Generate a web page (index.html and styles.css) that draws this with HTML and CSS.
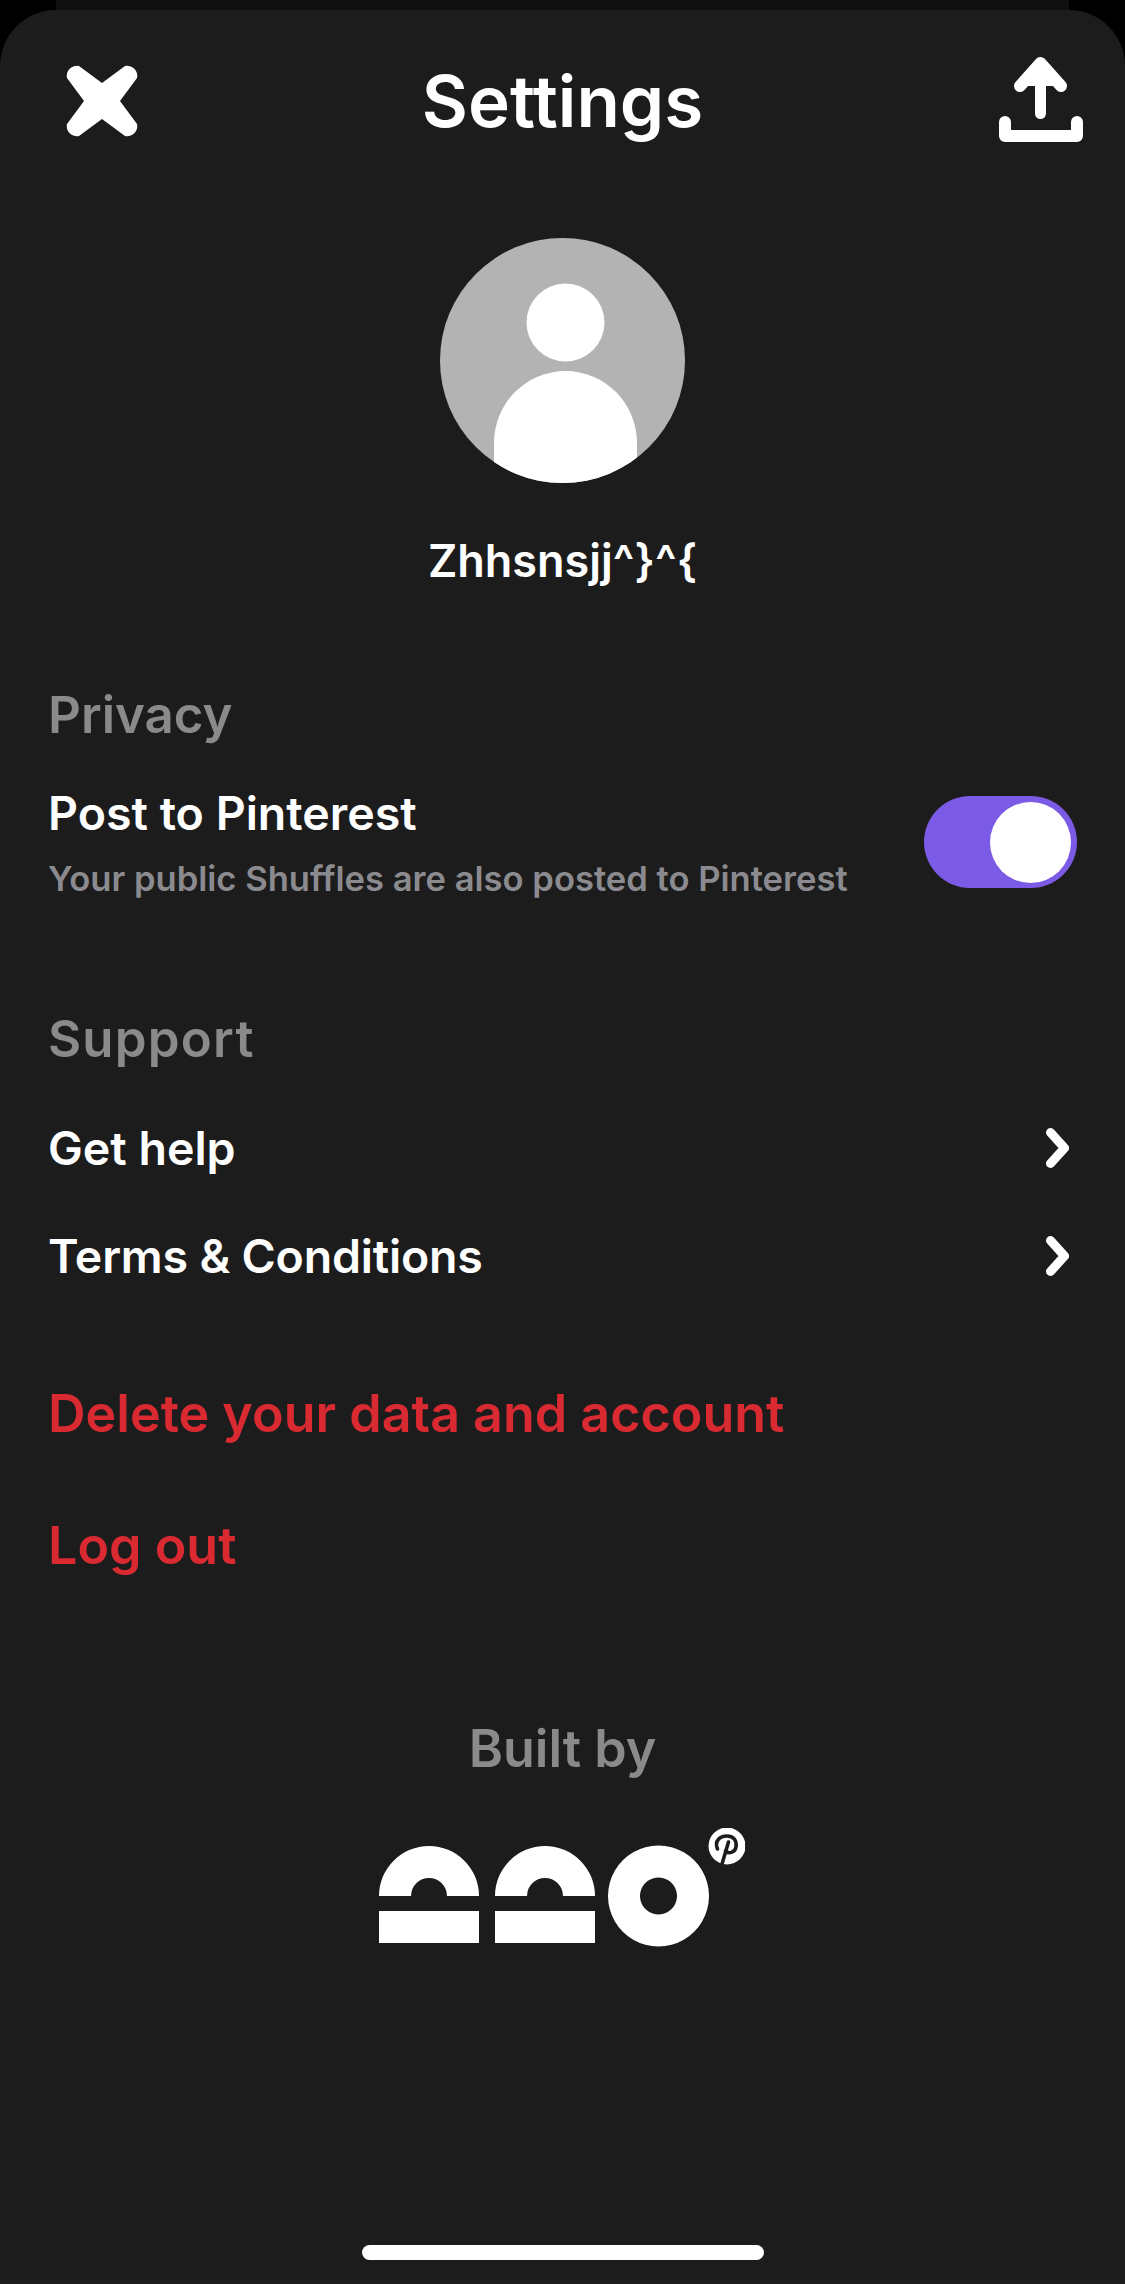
FILE: index.html
```html
<!DOCTYPE html>
<html lang="en">
<head>
<meta charset="utf-8">
<title>Settings</title>
<link rel="stylesheet" href="styles.css">
</head>
<body>
<div class="backsheet"></div>
<main class="sheet">
  <header class="topbar">
    <svg class="icon-close" viewBox="0 0 72 72" width="72" height="72" aria-hidden="true">
      <path d="M36 18 L13 1 A10 10 0 0 0 1 13 L18 36 L1 59 A10 10 0 0 0 13 71 L36 54 L59 71 A10 10 0 0 0 71 59 L54 36 L71 13 A10 10 0 0 0 59 1 Z" fill="#fff"/>
    </svg>
    <h1 class="title">Settings</h1>
    <svg class="icon-share" viewBox="0 0 84 86" width="84" height="86" aria-hidden="true">
      <path d="M21 30 L41.5 7 L62 30" fill="#fff" stroke="#fff" stroke-width="12" stroke-linecap="round" stroke-linejoin="round"/>
      <path d="M41.5 10 V57.5" fill="none" stroke="#fff" stroke-width="11" stroke-linecap="round"/>
      <path d="M6 66 V80 H78 V66" fill="none" stroke="#fff" stroke-width="12" stroke-linecap="round" stroke-linejoin="round"/>
    </svg>
  </header>

  <section class="profile">
    <svg class="avatar" viewBox="0 0 245 245" width="245" height="245" aria-hidden="true">
      <defs><clipPath id="avatar-clip"><circle cx="122.5" cy="122.5" r="122.5"/></clipPath></defs>
      <circle cx="122.5" cy="122.5" r="122.5" fill="#b3b3b3"/>
      <circle cx="125.5" cy="84.5" r="39" fill="#fff"/>
      <path clip-path="url(#avatar-clip)" d="M54 245 V205 A71.5 72 0 0 1 197 205 V245 Z" fill="#fff"/>
    </svg>
    <p class="username">Zhhsnsjj^}^{</p>
  </section>

  <section class="group group-privacy">
    <h2 class="group-title">Privacy</h2>
    <div class="toggle-row">
      <div class="toggle-text">
        <div class="row-label">Post to Pinterest</div>
        <div class="row-sub">Your public Shuffles are also posted to Pinterest</div>
      </div>
      <div class="switch"><span class="knob"></span></div>
    </div>
  </section>

  <section class="group group-support">
    <h2 class="group-title">Support</h2>
    <div class="link-row">
      <span class="row-label">Get help</span>
      <svg class="chevron" viewBox="0 0 23 40" width="23" height="40" aria-hidden="true"><path d="M4.5 4.5 L18.5 20 L4.5 35.5" fill="none" stroke="#fff" stroke-width="9" stroke-linecap="round" stroke-linejoin="round"/></svg>
    </div>
    <div class="link-row">
      <span class="row-label row-label-tight">Terms &amp; Conditions</span>
      <svg class="chevron" viewBox="0 0 23 40" width="23" height="40" aria-hidden="true"><path d="M4.5 4.5 L18.5 20 L4.5 35.5" fill="none" stroke="#fff" stroke-width="9" stroke-linecap="round" stroke-linejoin="round"/></svg>
    </div>
  </section>

  <section class="danger">
    <div class="danger-item">Delete your data and account</div>
    <div class="danger-item">Log out</div>
  </section>

  <footer class="built">
    <div class="built-label">Built by</div>
    <svg class="logo" viewBox="0 0 366 119" width="366" height="119" aria-hidden="true">
      <g fill="#fff">
        <path d="M0 68 A50 50 0 0 1 100 68 H68 A18 18 0 0 0 32 68 Z"/>
        <rect x="0" y="83" width="100" height="32"/>
        <path d="M116 68 A50 50 0 0 1 216 68 H184 A18 18 0 0 0 148 68 Z"/>
        <rect x="116" y="83" width="100" height="32"/>
        <path fill-rule="evenodd" d="M279.5 17.5 a50.5 50.5 0 1 0 0.01 0 Z M279.5 49.5 a18.5 18.5 0 1 1 -0.01 0 Z"/>
        <circle cx="348" cy="18" r="18.5"/>
      </g>
      <path d="M338.5 21 C335 13 341 8 348 8 C355 8 358 13 357 19 C356 25 349 26 346.5 23 M349.5 14 L343 36" fill="none" stroke="#1c1c1c" stroke-width="3.6" stroke-linecap="round"/>
    </svg>
  </footer>
  <div class="home-indicator"></div>
</main>
</body>
</html>
```

FILE: styles.css
```css
* { box-sizing: border-box; }
html, body { margin: 0; padding: 0; }
body {
  width: 1125px;
  height: 2284px;
  background: #000;
  font-family: Inter, "Liberation Sans", sans-serif;
  overflow: hidden;
  color: #fff;
}
h1, h2, p { margin: 0; font: inherit; }
.backsheet {
  height: 10px;
  margin: 0 56px -10px;
  background: #101010;
}
.sheet {
  display: flex;
  flex-direction: column;
  height: 2274px;
  margin-top: 10px;
  background: #1c1c1c;
  border-radius: 56px 56px 0 0;
  position: relative;
}
.topbar {
  height: 128px;
  padding: 46px 42px 0;
  display: grid;
  grid-template-columns: 1fr auto 1fr;
  align-items: start;
}
.icon-close { margin: 9px 0 0 24px; }
.icon-share { justify-self: end; }
.title {
  margin-top: 5px;
  font-size: 71px;
  line-height: 80px;
  font-weight: 600;
}
.profile {
  margin-top: 100px;
  display: flex;
  flex-direction: column;
  align-items: center;
}
.avatar { display: block; }
.username {
  margin-top: 48px;
  font-size: 45px;
  line-height: 60px;
  font-weight: 600;
}
.group { padding: 0 48px; }
.group-privacy { margin-top: 94px; }
.group-title {
  font-size: 51px;
  line-height: 60px;
  font-weight: 600;
  color: #8a8a8a;
}
.group-support .group-title { letter-spacing: 1.2px; }
.toggle-row {
  display: flex;
  justify-content: space-between;
  align-items: center;
  margin-top: 38px;
}
.row-label {
  font-size: 46.5px;
  line-height: 60px;
  font-weight: 600;
  color: #fff;
}
.row-label-tight { letter-spacing: -0.2px; }
.row-sub {
  margin-top: 13px;
  font-size: 34.6px;
  line-height: 44px;
  font-weight: 600;
  color: #8b8b8f;
}
.switch {
  width: 153px;
  height: 92px;
  border-radius: 46px;
  background: #7b5be6;
  padding: 6px;
  display: flex;
  justify-content: flex-end;
}
.knob {
  width: 81px;
  height: 81px;
  border-radius: 50%;
  background: #fff;
}
.group-support { margin-top: 109px; }
.link-row {
  display: flex;
  justify-content: space-between;
  align-items: center;
  height: 108px;
}
.group-support .group-title + .link-row { margin-top: 25px; }
.chevron { margin-right: 8px; }
.danger { padding: 0 48px; margin-top: 69px; }
.danger-item {
  font-size: 52px;
  line-height: 70px;
  font-weight: 600;
  color: #d92a32;
  margin-bottom: 62px;
}
.built {
  margin-top: 76px;
  display: flex;
  flex-direction: column;
  align-items: center;
}
.built-label {
  font-size: 52px;
  line-height: 60px;
  font-weight: 600;
  color: #8a8a8a;
}
.logo { display: block; margin: 49px 2px 0 0; }
.home-indicator {
  position: absolute;
  left: 362px;
  bottom: 24px;
  width: 402px;
  height: 15px;
  border-radius: 8px;
  background: #fff;
}
```
